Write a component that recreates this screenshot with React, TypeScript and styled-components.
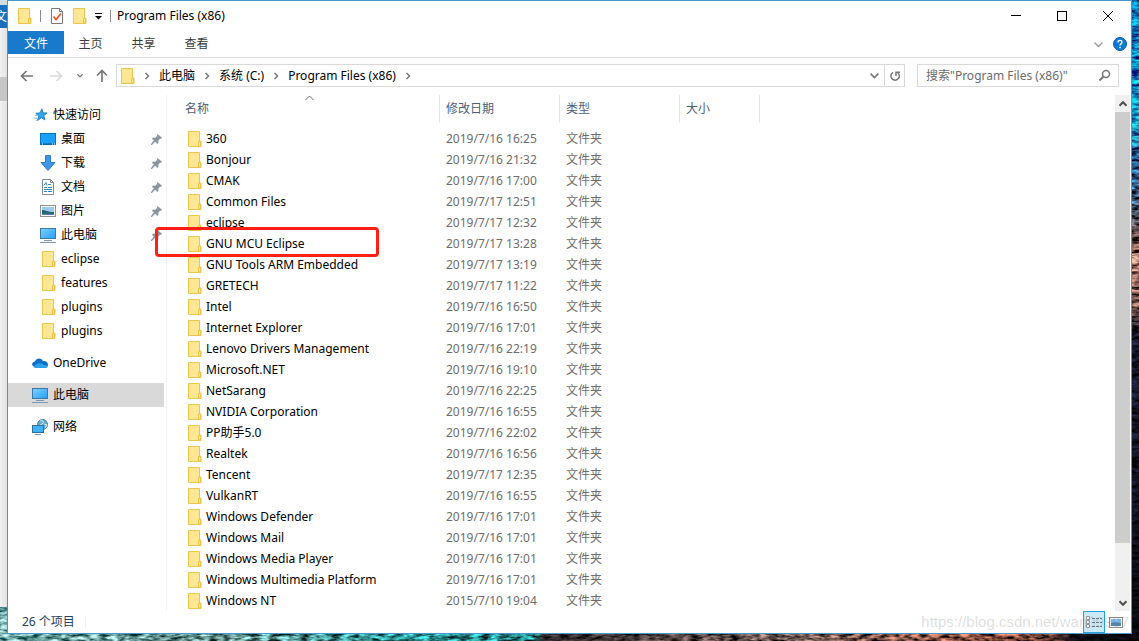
import React from 'react';
import styled, { createGlobalStyle } from 'styled-components';

const Global = createGlobalStyle`
  * { box-sizing: border-box; }
  body { margin: 0; background: #2a5a6a; }
  body, button, input {
    font-family: "Noto Sans", "Noto Sans CJK SC", sans-serif;
    font-size: 12px;
    line-height: 16px;
    color: #000;
  }
  button { border: 0; padding: 0; background: none; }
`;

const Desktop = styled.div`
  position: relative;
  min-height: 100vh;
  padding: 0 7px 7px;
  overflow: hidden;
`;
const Wallpaper = styled.svg`
  position: absolute;
  inset: 0;
  width: 100%;
  height: 100%;
`;
const BackWindow = styled.div`
  position: absolute;
  left: 0;
  top: 0;
  bottom: 34px;
  width: 7px;
  overflow: hidden;
  background: linear-gradient(90deg, #f1f1f1, #e2e2e2);
`;
const BackTab = styled.div`
  height: 28px;
  border-top: 5px solid #cfdde2;
  background: #1a6fbd;
  color: #fff;
  text-indent: -5px;
  line-height: 24px;
`;
const BackBlock = styled.div`
  margin-top: 49px;
  height: 24px;
  background: #c6c6c6;
`;
const Window = styled.main`
  position: relative;
  display: flex;
  flex-direction: column;
  min-height: calc(100vh - 7px);
  background: #fff;
  border: 1px solid #4a98c9;
`;
const TitleBar = styled.header`
  display: flex;
  align-items: center;
  height: 30px;
  padding-left: 10px;
`;
const QuickTools = styled.div`
  display: flex;
  align-items: center;
  gap: 8px;
  margin-right: 6px;
`;
const Divider = styled.span`
  width: 1px;
  height: 12px;
  background: #8c8c8c;
`;
const IconButton = styled.button<{ $w?: number; $h?: number }>`
  display: flex;
  align-items: center;
  justify-content: center;
  width: ${(p) => p.$w ?? 16}px;
  height: ${(p) => p.$h ?? 21}px;
  flex: none;
`;
const Title = styled.h1`
  margin: 0;
  flex: 1;
  font-size: 12px;
  font-weight: 400;
`;
const Ribbon = styled.nav`
  display: flex;
  height: 27px;
  padding-right: 4px;
  border-bottom: 1px solid #dadbdc;
`;
const RibbonTab = styled.button<{ $active?: boolean }>`
  width: ${(p) => (p.$active ? 56 : 53)}px;
  height: 23px;
  padding-top: 2px;
  color: ${(p) => (p.$active ? '#fff' : '#3c3c3c')};
  background: ${(p) => (p.$active ? '#1979ca' : 'none')};
`;
const RibbonEnd = styled.div`
  display: flex;
  align-items: center;
  gap: 7px;
  margin-left: auto;
`;
const AddressRow = styled.div`
  display: flex;
  align-items: center;
  height: 37px;
  padding: 0 12px 2px 11px;
`;
const NavButtons = styled.div`
  display: flex;
  gap: 10px;
`;
const AddressBar = styled.div`
  display: flex;
  align-items: center;
  flex: 1;
  gap: 6px;
  height: 23px;
  margin-left: 5px;
  padding-left: 4px;
  border: 1px solid #d9d9d9;
`;
const AddressTools = styled.div`
  display: flex;
  margin-left: auto;
`;
const Crumb = styled.a`
  color: #000;
  text-decoration: none;
`;
const Refresh = styled(IconButton)`
  border-left: 1px solid #d9d9d9;
`;
const Search = styled.form`
  display: flex;
  align-items: center;
  width: 202px;
  height: 23px;
  margin-left: 12px;
  padding: 0 6px 0 8px;
  border: 1px solid #d9d9d9;
`;
const SearchInput = styled.input`
  flex: 1;
  min-width: 0;
  padding: 0;
  border: 0;
  outline: 0;
  &::placeholder { color: #6d6d6d; opacity: 1; }
`;
const Body = styled.div`
  display: flex;
  flex: 1;
  padding-right: 1px;
`;
const Sidebar = styled.aside`
  display: flex;
  flex-direction: column;
  gap: 8px;
  width: 159px;
  flex: none;
  padding: 8px 2px 0 0;
  border-right: 1px solid #f2f2f2;
`;
const Group = styled.ul`
  margin: 0;
  padding: 0;
  list-style: none;
`;
const NavItem = styled.a<{ $child?: boolean; $selected?: boolean }>`
  display: flex;
  align-items: center;
  justify-content: space-between;
  height: 24px;
  padding: 0 2px 0 ${(p) => (p.$child ? 32 : 24)}px;
  color: #000;
  text-decoration: none;
  background: ${(p) => (p.$selected ? '#d9d9d9' : 'none')};
`;
const NavLabel = styled.span`
  display: flex;
  align-items: center;
  gap: 5px;
`;
const IconSlot = styled.span`
  display: flex;
  justify-content: flex-end;
  width: 16px;
`;
const Files = styled.section`
  flex: 1;
  min-width: 0;
`;
const Table = styled.table`
  width: 100%;
  table-layout: fixed;
  border-collapse: collapse;
`;
const Th = styled.th<{ $w?: number }>`
  position: relative;
  width: ${(p) => (p.$w ? `${p.$w}px` : 'auto')};
  padding: 0 0 5px;
  text-align: left;
  font-weight: 400;
  color: #4c607a;
`;
const HeadLabel = styled.div<{ $first?: boolean }>`
  height: 28px;
  padding-left: ${(p) => (p.$first ? 18 : 6)}px;
  line-height: 28px;
  border-right: 1px solid #e5e5e5;
`;
const SortMark = styled.svg`
  position: absolute;
  top: 0;
  left: 138px;
`;
const Td = styled.td`
  height: 21px;
  padding: 0 0 0 6px;
  color: #6d6d6d;
`;
const NameTd = styled.td`
  position: relative;
  height: 21px;
  padding: 0 0 0 21px;
`;
const FileName = styled.span`
  display: flex;
  align-items: center;
  gap: 4px;
  white-space: nowrap;
`;
const Highlight = styled.span`
  position: absolute;
  top: -6px;
  left: -12px;
  width: 224px;
  height: 30px;
  border: 3px solid #ff2013;
  border-radius: 4px;
`;
const ScrollBar = styled.div`
  display: flex;
  flex-direction: column;
  width: 15px;
  flex: none;
  background: #f0f0f0;
`;
const Thumb = styled.div`
  flex: 1;
  margin-bottom: 51px;
  background: #cdcdcd;
`;
const StatusBar = styled.footer`
  display: flex;
  align-items: center;
  height: 22px;
  padding: 0 4px 0 14px;
  color: #26405f;
`;
const Count = styled.span`
  padding-right: 10px;
  margin-right: auto;
  line-height: 12px;
  border-right: 1px solid #f0f0f0;
`;
const ViewButton = styled.button<{ $on?: boolean }>`
  display: flex;
  align-items: center;
  justify-content: center;
  width: 22px;
  height: 22px;
  border: 1px solid ${(p) => (p.$on ? '#26a0da' : 'transparent')};
  background: ${(p) => (p.$on ? '#cbe8f6' : 'none')};
`;
const Watermark = styled.span`
  position: absolute;
  right: 2px;
  bottom: 0;
  font: 15px/22px "Liberation Sans", sans-serif;
  color: rgba(120, 120, 120, 0.25);
`;

const Folder = () => (
  <svg width="14" height="16" viewBox="0 0 14 16">
    <path d="M.5.5h11v9.500h1.500v5.500H.5z" fill="#ffe793" stroke="#ecc54c" />
    <path d="M10.500 15v-4.500h2v4.500z" fill="#ffe793" stroke="#ecc54c" />
  </svg>
);
const Star = () => (
  <svg width="14" height="14" viewBox="0 0 16 16">
    <path d="M9 1l1.400 4.500 4.600.2-3.800 3 1.300 5L8.500 11 4 14.200l1.500-5L2 6l4.800-.300z" fill="#35a7ee" stroke="#1779c4" />
    <path d="M1 8.500h3M0 11.500h4M2 14h2" stroke="#5db7ee" />
  </svg>
);
const DesktopIcon = () => (
  <svg width="16" height="16" viewBox="0 0 16 16">
    <rect x=".5" y="2.500" width="15" height="11" fill="#1ba0f8" stroke="#0874c4" />
    <path d="M1 13h14" stroke="#075a9c" /><path d="M2 13h1M12 13h1M14 13h1" stroke="#fff" />
  </svg>
);
const Download = () => (
  <svg width="16" height="16" viewBox="0 0 16 16">
    <path d="M5.500.5h5v7h4.500L8 15.500 1 7.500h4.500z" fill="#3f96e8" stroke="#2b7bd0" />
  </svg>
);
const Doc = () => (
  <svg width="16" height="16" viewBox="0 0 16 16">
    <path d="M2.500.5h8l3 3v12h-11z" fill="#fff" stroke="#85888b" />
    <path d="M10.500.5v3h3" fill="none" stroke="#85888b" />
    <path d="M4 6.500l2-3 1 3M8 5.500h3M4 8.500h3M8 8.500h4M4 10.500h8M4 12.500h3M8 12.500h4" fill="none" stroke="#3285c5" />
  </svg>
);
const Picture = () => (
  <svg width="16" height="16" viewBox="0 0 16 16">
    <rect x=".5" y="2.500" width="15" height="11" fill="#fff" stroke="#919191" />
    <path d="M2 4h12v8H2z" fill="#9cc9ef" /><path d="M2 7c4 0 5 2 12 2v3H2z" fill="#2d6670" /><path d="M2 11h12v1H2z" fill="#4e82b8" />
  </svg>
);
const Pc = () => (
  <svg width="16" height="16" viewBox="0 0 16 16">
    <defs><linearGradient id="pc" x2="1" y2="1"><stop stopColor="#7fd0ff" /><stop offset="1" stopColor="#25a0f5" /></linearGradient></defs>
    <rect x=".5" y="1.500" width="15" height="10" fill="url(#pc)" stroke="#3b7aa6" />
    <path d="M4 13.500h8M0 15.500h16" stroke="#7d99ad" />
  </svg>
);
const Cloud = () => (
  <svg width="16" height="16" viewBox="0 0 16 16">
    <path d="M3 12C-1 11-.5 7 3 6.500 4 3 9 2 11 6c3-.5 5 1.500 5 3.500S14.500 13 13 13H4z" fill="#0f6fc8" />
    <path d="M1.500 11.500C4 9 6 7.500 9 8.500l6.500 2.500c-.5 1.500-1.500 2-2.500 2H4c-1 0-2-.5-2.500-1.500z" fill="#28a0ea" />
  </svg>
);
const Network = () => (
  <svg width="16" height="16" viewBox="0 0 16 16">
    <circle cx="10.500" cy="5.500" r="5" fill="#68a9d2" stroke="#47809f" />
    <path d="M8 2c2-1 4 0 3 2s-3 1-3 3M12 5l3 1-2 3" stroke="#d7edf7" fill="none" />
    <rect x=".5" y="6.500" width="11" height="7" fill="#42b2f7" stroke="#2f6f9c" />
    <path d="M3 15.500h6" stroke="#7d99ad" />
  </svg>
);
const Pin = () => (
  <svg width="11" height="11" viewBox="0 0 12 12">
    <path d="M7 0l5 4-1 1.500-1-.3-2 2 .2 2.600L7 11 4.500 8.500 1 12H0v-1l3-3.800L1 5l1.200-1.300 2.600.3 2-2L6.200 1z" fill="#8b98a3" />
  </svg>
);
const Chevron = ({ dir = 'right', color = '#777', size = 8, weight = 1.5 }: { dir?: 'right' | 'down' | 'up'; color?: string; size?: number; weight?: number }) => (
  <svg width={size} height={size} viewBox="0 0 8 8" fill="none" stroke={color} strokeWidth={weight}>
    <path d={dir === 'right' ? 'M2.500 1l3 3-3 3' : dir === 'down' ? 'M.5 2.300L4 5.800l3.500-3.500' : 'M.5 5.700L4 2.200l3.500 3.500'} />
  </svg>
);
const Arrow = ({ d, color = '#777' }: { d: string; color?: string }) => (
  <svg width="14" height="14" viewBox="0 0 14 14" fill="none" stroke={color} strokeWidth="1.700"><path d={d} /></svg>
);

const quick: [string, () => React.JSX.Element, boolean][] = [
  ['桌面', DesktopIcon, true],
  ['下载', Download, true],
  ['文档', Doc, true],
  ['图片', Picture, true],
  ['此电脑', Pc, true],
  ['eclipse', Folder, false],
  ['features', Folder, false],
  ['plugins', Folder, false],
  ['plugins', Folder, false],
];
const files: [string, string][] = [
  ['360', '2019/7/16 16:25'],
  ['Bonjour', '2019/7/16 21:32'],
  ['CMAK', '2019/7/16 17:00'],
  ['Common Files', '2019/7/17 12:51'],
  ['eclipse', '2019/7/17 12:32'],
  ['GNU MCU Eclipse', '2019/7/17 13:28'],
  ['GNU Tools ARM Embedded', '2019/7/17 13:19'],
  ['GRETECH', '2019/7/17 11:22'],
  ['Intel', '2019/7/16 16:50'],
  ['Internet Explorer', '2019/7/16 17:01'],
  ['Lenovo Drivers Management', '2019/7/16 22:19'],
  ['Microsoft.NET', '2019/7/16 19:10'],
  ['NetSarang', '2019/7/16 22:25'],
  ['NVIDIA Corporation', '2019/7/16 16:55'],
  ['PP助手5.0', '2019/7/16 22:02'],
  ['Realtek', '2019/7/16 16:56'],
  ['Tencent', '2019/7/17 12:35'],
  ['VulkanRT', '2019/7/16 16:55'],
  ['Windows Defender', '2019/7/16 17:01'],
  ['Windows Mail', '2019/7/16 17:01'],
  ['Windows Media Player', '2019/7/16 17:01'],
  ['Windows Multimedia Platform', '2019/7/16 17:01'],
  ['Windows NT', '2015/7/10 19:04'],
];

interface NavRowProps {
  label: string;
  Icon: () => React.JSX.Element;
  child?: boolean;
  selected?: boolean;
  pinned?: boolean;
}
const NavRow = ({ label, Icon, child, selected, pinned }: NavRowProps) => (
  <li>
    <NavItem href={`#${label}`} $child={child} $selected={selected}>
      <NavLabel><IconSlot><Icon /></IconSlot>{label}</NavLabel>
      {pinned && <Pin />}
    </NavItem>
  </li>
);

export default function App() {
  return (
    <Desktop>
      <Global />
      <Wallpaper preserveAspectRatio="none" viewBox="0 0 1139 641">
        <defs>
          <linearGradient id="side" x2="0" y2="1">
            <stop offset="0" stopColor="#0560a6" /><stop offset=".1" stopColor="#067fb8" /><stop offset=".18" stopColor="#11a5c8" />
            <stop offset=".24" stopColor="#1e5d93" /><stop offset=".32" stopColor="#41617f" /><stop offset=".36" stopColor="#5b4a48" />
            <stop offset=".4" stopColor="#94695a" /><stop offset=".48" stopColor="#6b5048" /><stop offset=".52" stopColor="#14192c" />
            <stop offset=".75" stopColor="#10121f" /><stop offset="1" stopColor="#07080c" />
          </linearGradient>
          <linearGradient id="floor">
            <stop offset="0" stopColor="#6aa3a2" /><stop offset=".2" stopColor="#5f8a86" /><stop offset=".35" stopColor="#2b8e8f" />
            <stop offset=".47" stopColor="#258a8b" /><stop offset=".48" stopColor="#2b2528" /><stop offset=".7" stopColor="#6b5852" />
            <stop offset=".85" stopColor="#895040" /><stop offset=".92" stopColor="#7a4638" /><stop offset=".95" stopColor="#0f0d12" /><stop offset="1" stopColor="#08090e" />
          </linearGradient>
          <filter id="grain" x="0" y="0" width="100%" height="100%" colorInterpolationFilters="sRGB">
            <feTurbulence type="fractalNoise" baseFrequency=".1 .3" numOctaves="3" seed="4" />
            <feColorMatrix values="2 0 0 0 -.5  2 0 0 0 -.5  2 0 0 0 -.5  0 0 0 0 1" result="noise" />
            <feBlend in="noise" in2="SourceGraphic" mode="overlay" />
          </filter>
        </defs>
        <rect x="1120" width="19" height="641" fill="url(#side)" filter="url(#grain)" />
        <rect y="600" width="1132" height="41" fill="url(#floor)" filter="url(#grain)" />
      </Wallpaper>
      <BackWindow>
        <BackTab>文</BackTab>
        <BackBlock />
      </BackWindow>

      <Window>
        <TitleBar>
          <QuickTools>
            <Folder />
            <Divider />
            <IconButton aria-label="属性">
              <svg width="12" height="16" viewBox="0 0 12 16">
                <path d="M.5.5h8l3 3v12H.5z" fill="#fff" stroke="#7a7a7a" />
                <path d="M8.500.5v3h3" fill="none" stroke="#7a7a7a" />
                <path d="M2.500 8.500l2.500 3 5-6" fill="none" stroke="#e2592c" strokeWidth="1.800" />
              </svg>
            </IconButton>
            <IconButton $w={14} aria-label="新建文件夹"><Folder /></IconButton>
            <IconButton $w={7} aria-label="自定义快速访问工具栏">
              <svg width="7" height="7" viewBox="0 0 7 7"><path d="M0 0h7v1H0zM0 3h7L3.500 6.500z" /></svg>
            </IconButton>
            <Divider />
          </QuickTools>
          <Title>Program Files (x86)</Title>
          <IconButton $w={46} aria-label="最小化"><svg width="10" height="10"><path d="M0 4.500h10" stroke="#000" /></svg></IconButton>
          <IconButton $w={46} aria-label="最大化"><svg width="10" height="10"><rect x=".5" y=".5" width="9" height="9" fill="none" stroke="#000" /></svg></IconButton>
          <IconButton $w={46} aria-label="关闭"><svg width="10" height="10"><path d="M0 0l10 10M10 0L0 10" stroke="#000" /></svg></IconButton>
        </TitleBar>

        <Ribbon>
          <RibbonTab $active>文件</RibbonTab>
          <RibbonTab>主页</RibbonTab>
          <RibbonTab>共享</RibbonTab>
          <RibbonTab>查看</RibbonTab>
          <RibbonEnd>
            <IconButton aria-label="展开功能区"><Chevron dir="down" color="#999" size={9} weight={1.2} /></IconButton>
            <IconButton $w={14} aria-label="帮助">
              <svg width="14" height="14" viewBox="0 0 14 14">
                <circle cx="7" cy="7" r="6.500" fill="#0f78d4" stroke="#0a5fae" />
                <path d="M5 5.500c0-3 4-2.500 4-.300C9 6.700 7 6.800 7 8.500M7 9.700v1.500" fill="none" stroke="#fff" strokeWidth="1.400" />
              </svg>
            </IconButton>
          </RibbonEnd>
        </Ribbon>

        <AddressRow>
          <NavButtons>
            <IconButton aria-label="返回"><Arrow d="M13 7H2M6.500 2L1.500 7l5 5" /></IconButton>
            <IconButton $w={22} aria-label="前进"><Arrow d="M1 7h11M7.500 2l5 5-5 5" color="#d9d9d9" /></IconButton>
            <IconButton $w={6} aria-label="最近浏览的位置"><Chevron dir="down" size={7} /></IconButton>
            <IconButton $w={18} aria-label="上移"><Arrow d="M7 13V2M2 6.500l5-5 5 5" /></IconButton>
          </NavButtons>
          <AddressBar>
            <IconButton $w={14} aria-label="位置"><Folder /></IconButton>
            <IconButton $w={12} aria-label="展开"><Chevron /></IconButton>
            <Crumb href="#pc">此电脑</Crumb>
            <IconButton $w={12} aria-label="展开"><Chevron /></IconButton>
            <Crumb href="#c">系统 (C:)</Crumb>
            <IconButton $w={12} aria-label="展开"><Chevron /></IconButton>
            <Crumb href="#x86">Program Files (x86)</Crumb>
            <IconButton $w={12} aria-label="展开"><Chevron /></IconButton>
            <AddressTools>
              <IconButton $w={20} aria-label="以前的位置"><Chevron dir="down" size={9} /></IconButton>
              <Refresh $w={20} aria-label="刷新">
                <svg width="12" height="12" viewBox="0 0 12 12" fill="none" stroke="#777" strokeWidth="1.500">
                  <path d="M4 2.300A4.200 4.200 0 1 0 8.500 2.500M7 6V2.200h4" />
                </svg>
              </Refresh>
            </AddressTools>
          </AddressBar>
          <Search>
            <SearchInput aria-label="搜索" placeholder={'搜索"Program Files (x86)"'} />
            <IconButton aria-label="开始搜索">
              <svg width="13" height="13" viewBox="0 0 13 13" fill="none" stroke="#777"><circle cx="8" cy="5" r="3.500" strokeWidth="1.500" /><path d="M5.500 7.500L1.500 11.500" strokeWidth="2" /></svg>
            </IconButton>
          </Search>
        </AddressRow>

        <Body>
          <Sidebar>
            <Group>
              <NavRow label="快速访问" Icon={Star} />
              {quick.map(([label, Icon, pinned], i) => (
                <NavRow key={i} label={label} Icon={Icon} pinned={pinned} child />
              ))}
            </Group>
            <Group><NavRow label="OneDrive" Icon={Cloud} /></Group>
            <Group><NavRow label="此电脑" Icon={Pc} selected /></Group>
            <Group><NavRow label="网络" Icon={Network} /></Group>
          </Sidebar>

          <Files>
            <Table>
              <thead>
                <tr>
                  <Th $w={273}>
                    <HeadLabel $first>名称</HeadLabel>
                    <SortMark width="9" height="6" viewBox="0 0 9 6"><path d="M.5 5L4.500 1l4 4" fill="none" stroke="#666" /></SortMark>
                  </Th>
                  <Th $w={120}><HeadLabel>修改日期</HeadLabel></Th>
                  <Th $w={120}><HeadLabel>类型</HeadLabel></Th>
                  <Th $w={80}><HeadLabel>大小</HeadLabel></Th>
                  <td />
                </tr>
              </thead>
              <tbody>
                {files.map(([name, date]) => (
                  <tr key={name}>
                    <NameTd>
                      <FileName><Folder />{name}</FileName>
                      {name === 'GNU MCU Eclipse' && <Highlight />}
                    </NameTd>
                    <Td>{date}</Td>
                    <Td>文件夹</Td>
                    <Td />
                    <td />
                  </tr>
                ))}
              </tbody>
            </Table>
          </Files>
          <ScrollBar>
            <IconButton $w={15} $h={17} aria-label="向上滚动"><Chevron dir="up" color="#505050" weight={2} /></IconButton>
            <Thumb />
            <IconButton $w={15} $h={17} aria-label="向下滚动"><Chevron dir="down" color="#505050" weight={2} /></IconButton>
          </ScrollBar>
        </Body>

        <StatusBar>
          <Count>26 个项目</Count>
          <ViewButton $on aria-label="详细信息">
            <svg width="16" height="13" viewBox="0 0 16 13" fill="none" stroke="#999">
              <path d="M.5.5h3v3h-3zM.5 4.500h3v3h-3zM.5 8.500h3v3h-3z" fill="#fff" /><path d="M6 2.500h10M6 6.500h10M6 10.500h10" stroke="#678" strokeDasharray="3 1" />
            </svg>
          </ViewButton>
          <ViewButton aria-label="大图标">
            <svg width="14" height="11" viewBox="0 0 14 11"><rect x=".5" y=".5" width="13" height="10" fill="#fff" stroke="#8a8a8a" /><path d="M2 2h10v4H2z" fill="#7fbcf0" /><path d="M2 6l4-1 6 1v3H2z" fill="#5585ad" /></svg>
          </ViewButton>
        </StatusBar>
        <Watermark>https://blog.csdn.net/wan09907</Watermark>
      </Window>
    </Desktop>
  );
}
